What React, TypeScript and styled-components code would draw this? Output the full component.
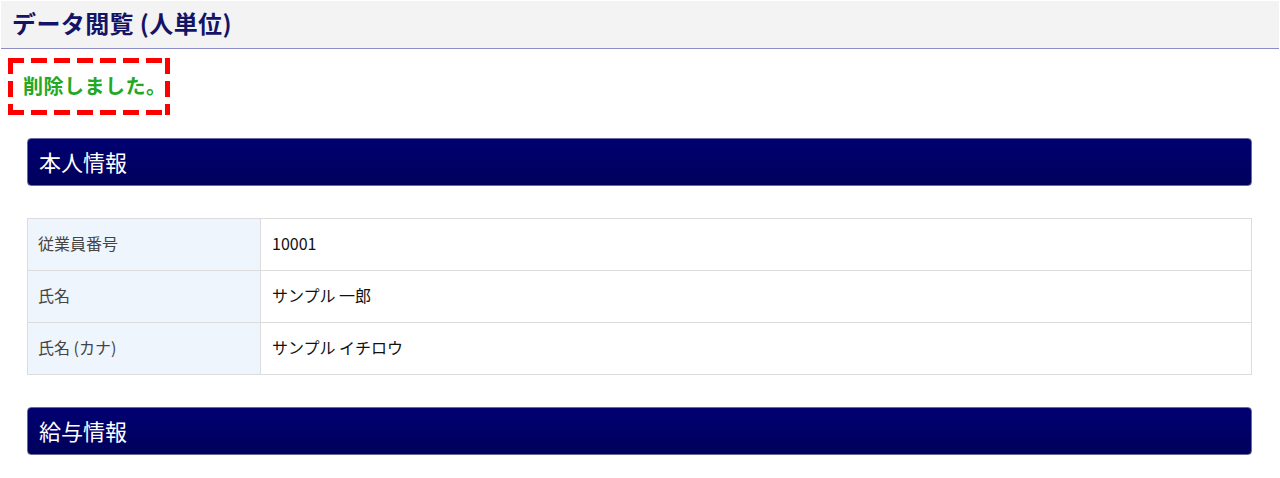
import React from "react";
import styled, { createGlobalStyle } from "styled-components";

const GlobalStyle = createGlobalStyle`
  html, body {
    margin: 0;
    padding: 0;
    background: #ffffff;
  }
  body {
    font-family: "Noto Sans CJK JP", "Noto Sans", sans-serif;
    color: #222;
  }
`;

type Row = { label: string; value: string };

const rows: Row[] = [
  { label: "従業員番号", value: "10001" },
  { label: "氏名", value: "サンプル 一郎" },
  { label: "氏名 (カナ)", value: "サンプル イチロウ" },
];

export default function App() {
  return (
    <>
      <GlobalStyle />
      <Page>
        <PageHeader>
          <PageTitle>データ閲覧 (人単位)</PageTitle>
        </PageHeader>
        <Notice>削除しました。</Notice>
        <Content>
          <SectionBar>本人情報</SectionBar>
          <InfoTable>
            <tbody>
              {rows.map((r) => (
                <tr key={r.label}>
                  <LabelCell>{r.label}</LabelCell>
                  <ValueCell>{r.value}</ValueCell>
                </tr>
              ))}
            </tbody>
          </InfoTable>
          <SectionBar>給与情報</SectionBar>
        </Content>
      </Page>
    </>
  );
}

const Page = styled.div`
  padding-top: 1px;
  width: 1280px;
  min-height: 478px;
`;

const PageHeader = styled.header`
  margin: 0 1px;
  height: 48px;
  box-sizing: border-box;
  background: #f3f3f3;
  border-bottom: 1px solid #8c8cc6;
  display: flex;
  align-items: center;
  padding: 0 0 4px 11px;
`;

const PageTitle = styled.h1`
  margin: 0;
  font-size: 24px;
  font-weight: 700;
  color: #141466;
  letter-spacing: 0.4px;
`;

/* long red dashes, drawn with gradients so the dash/gap lengths match */
const dashH = "repeating-linear-gradient(90deg, #ff0000 0 16px, transparent 16px 23px)";
const dashV = "repeating-linear-gradient(180deg, #ff0000 0 16px, transparent 16px 23px)";

const Notice = styled.div`
  display: inline-block;
  margin: 9px 0 0 8px;
  padding: 13px 3px 15px 15px;
  background:
    ${dashH} left top / 100% 5px no-repeat,
    ${dashH} left bottom / 100% 5px no-repeat,
    ${dashV} left top / 5px 100% no-repeat,
    ${dashV} right top / 5px 100% no-repeat;
  font-size: 20px;
  font-weight: 700;
  line-height: 29px;
  letter-spacing: 0.5px;
  color: #22a822;
`;

const Content = styled.div`
  padding: 23px 28px 0 27px;
  display: flex;
  flex-direction: column;
  gap: 32px;
`;

const SectionBar = styled.div`
  height: 48px;
  box-sizing: border-box;
  border-radius: 4px;
  border: 1px solid #6a6a9a;
  background: linear-gradient(#000072, #00005c);
  color: #ffffff;
  font-size: 22px;
  display: flex;
  align-items: center;
  padding: 0 0 3px 11px;
`;

const InfoTable = styled.table`
  width: 100%;
  border-collapse: collapse;
  border: 1px solid #dcdcdc;
  font-size: 16px;

  tr {
    height: 52px;
  }
  td {
    border: 1px solid #dcdcdc;
    padding-bottom: 5px;
  }
`;

const LabelCell = styled.td`
  width: 233px;
  box-sizing: border-box;
  background: #eef5fd;
  color: #444;
  padding-left: 10px;
`;

const ValueCell = styled.td`
  color: #111;
  padding-left: 11px;
`;
